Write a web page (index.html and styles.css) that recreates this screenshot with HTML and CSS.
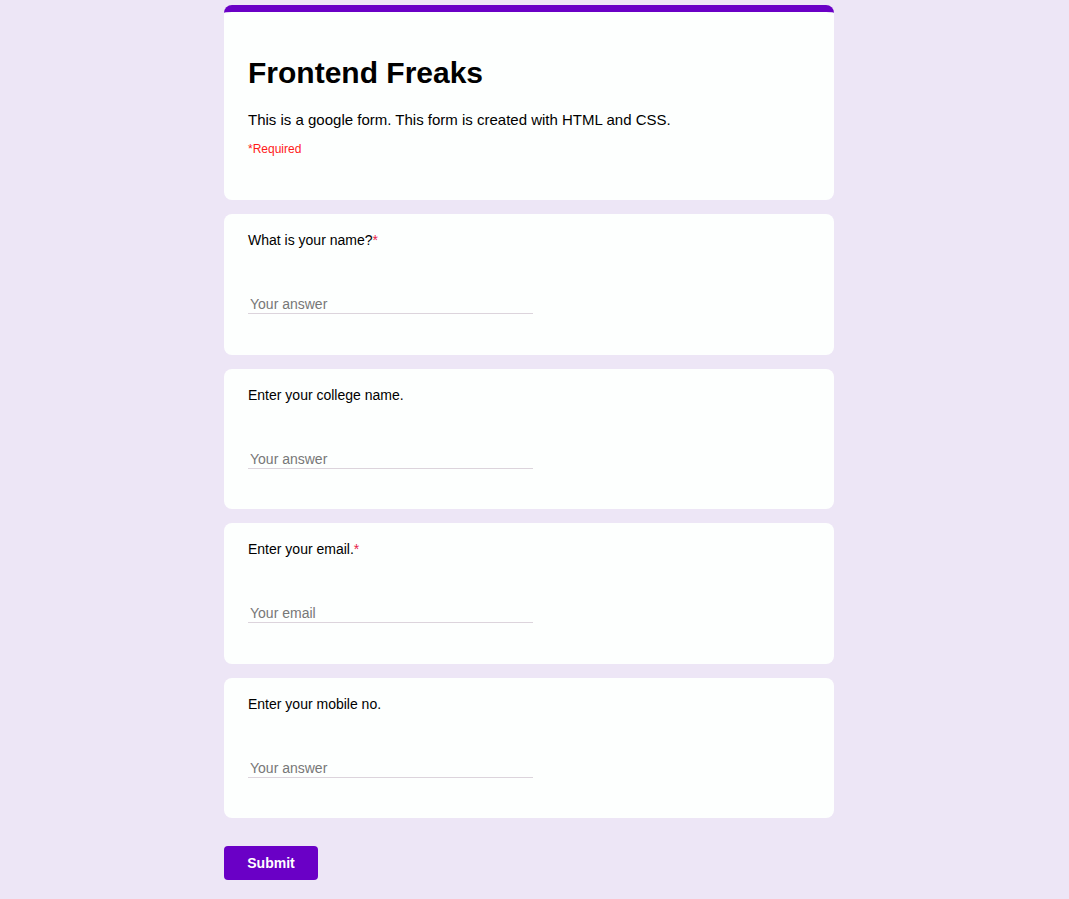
FILE: index.html
```html
<!DOCTYPE html>
<html lang="en">
<head>
<meta charset="UTF-8">
<title>Frontend Freaks</title>
<link rel="stylesheet" href="styles.css">
</head>
<body>
<main class="form">
  <section class="card header-card">
    <h1 class="title">Frontend Freaks</h1>
    <p class="desc">This is a google form. This form is created with HTML and CSS.</p>
    <p class="required">*Required</p>
  </section>
  <section class="card question">
    <label class="label">What is your name?<span class="star">*</span></label>
    <input class="answer" type="text" placeholder="Your answer">
  </section>
  <section class="card question">
    <label class="label">Enter your college name.</label>
    <input class="answer" type="text" placeholder="Your answer">
  </section>
  <section class="card question">
    <label class="label">Enter your email.<span class="star">*</span></label>
    <input class="answer" type="email" placeholder="Your email">
  </section>
  <section class="card question">
    <label class="label">Enter your mobile no.</label>
    <input class="answer" type="text" placeholder="Your answer">
  </section>
  <div class="actions">
    <button class="submit" type="button">Submit</button>
  </div>
</main>
</body>
</html>
```
FILE: styles.css
```css
* { box-sizing: border-box; }
html, body {
  margin: 0;
  padding: 0;
  background: #ede6f6;
  font-family: "Liberation Sans", Arial, sans-serif;
  color: #000;
}
.form {
  width: 610px;
  margin: 0 0 0 calc(50% - 310.5px);
  padding: 5px 0 19px;
  display: flex;
  flex-direction: column;
  gap: 14px;
}
.card {
  background: #fdfffe;
  border-radius: 8px;
  padding: 18px 24px 40px;
}
.header-card {
  border-top: 7px solid #6a00c6;
  padding: 44px 24px 44px;
}
.title {
  margin: 0;
  font-size: 30px;
  line-height: 34px;
  font-weight: bold;
}
.desc {
  margin: 21px 0 0;
  font-size: 15px;
  line-height: 18px;
}
.required {
  margin: 13px 0 0;
  font-size: 12px;
  line-height: 14px;
  color: #ff1a1a;
}
.question {
  display: flex;
  flex-direction: column;
  align-items: flex-start;
  height: 140.5px;
}
.label {
  font-size: 14px;
  line-height: 16px;
}
.star { color: #e8204a; }
.answer {
  margin-top: 48px;
  width: 285px;
  height: 18px;
  border: none;
  border-bottom: 1px solid #dcd4dc;
  padding: 0 2px 1px;
  font-family: "Liberation Sans", Arial, sans-serif;
  font-size: 14px;
  background: transparent;
  outline: none;
}
.answer::placeholder { color: #777; }
.actions { margin-top: 14px; }
.submit {
  width: 94px;
  height: 34px;
  border: none;
  border-radius: 4px;
  background: #6a00c6;
  color: #fff;
  font-family: "Liberation Sans", Arial, sans-serif;
  font-weight: bold;
  font-size: 14px;
}
```
